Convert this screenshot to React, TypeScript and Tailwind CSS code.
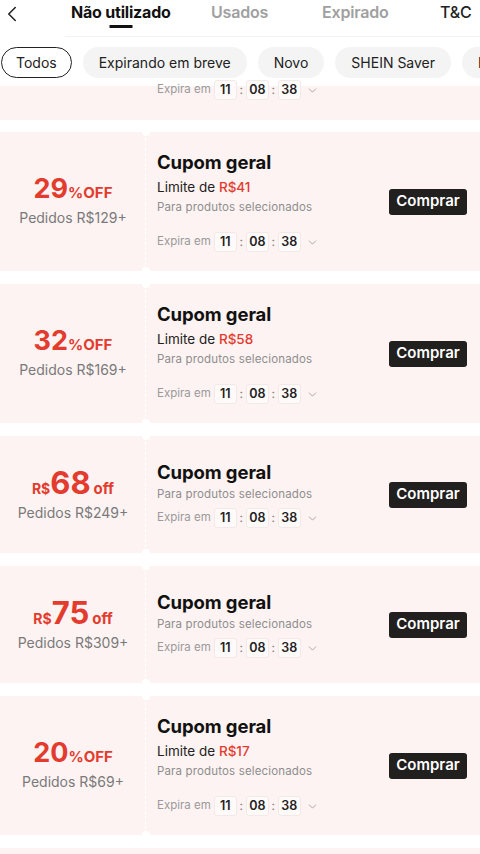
import { ChevronDown, ChevronLeft } from 'lucide-react';

type Coupon = {
  kind: 'pct' | 'amt';
  value: string;
  min: string;
  limit?: string;
};

const coupons: Coupon[] = [
  { kind: 'pct', value: '29', min: 'Pedidos R$129+', limit: 'R$41' },
  { kind: 'pct', value: '32', min: 'Pedidos R$169+', limit: 'R$58' },
  { kind: 'amt', value: '68', min: 'Pedidos R$249+' },
  { kind: 'amt', value: '75', min: 'Pedidos R$309+' },
  { kind: 'pct', value: '20', min: 'Pedidos R$69+', limit: 'R$17' },
];

const chips = ['Todos', 'Expirando em breve', 'Novo', 'SHEIN Saver', 'Exclusivo'];

function Timer() {
  return (
    <div className="flex items-center h-[22px] text-[11.5px]">
      <span className="text-[#9a9a9a] mr-[3px]">Expira em</span>
      {['11', '08', '38'].map((t, i) => (
        <div key={t} className="flex items-center">
          {i > 0 && <span className="text-[#777] w-[9px] text-center text-[12px]">:</span>}
          <span className="h-[20px] w-[23px] flex items-center justify-center rounded-[3px] bg-[#fffafa] border border-[#f4e8e8] text-[12.5px] font-semibold text-[#222]">
            {t}
          </span>
        </div>
      ))}
      <ChevronDown size={13} strokeWidth={1.5} className="ml-[5px] text-[#999]" />
    </div>
  );
}

function CouponCard({ c }: { c: Coupon }) {
  const tall = !!c.limit;
  return (
    <div className={`flex bg-[#fdf3f2] ${tall ? 'h-[139px]' : 'h-[117px]'}`}>
      <div className="relative w-[146px] shrink-0 flex flex-col items-center justify-center">
        {c.kind === 'pct' ? (
          <div className="flex items-baseline text-[#e33b2e] font-bold leading-none">
            <span className="text-[27px]">{c.value}</span>
            <span className="text-[15px]">%OFF</span>
          </div>
        ) : (
          <div className="flex items-baseline text-[#e33b2e] font-bold leading-none">
            <span className="text-[14px]">R$</span>
            <span className="text-[31px]">{c.value}</span>
            <span className="text-[15px] ml-[3px]">off</span>
          </div>
        )}
        <div className={`text-[14px] text-[#7a7a7a] ${c.kind === 'pct' ? 'mt-[5px]' : 'mt-[4px]'}`}>{c.min}</div>
        <div className="absolute right-0 top-[6px] bottom-[6px] border-r border-dashed border-white" />
        <div className="absolute -right-[4px] -top-[4px] w-[8px] h-[8px] rounded-full bg-white" />
        <div className="absolute -right-[4px] -bottom-[4px] w-[8px] h-[8px] rounded-full bg-white" />
      </div>
      <div className="flex-1 flex items-center pl-[11px] pr-[13px]">
        <div className="flex-1 flex flex-col">
          <div className="text-[18.5px] leading-[24px] font-bold text-[#111] tracking-[-0.1px]">Cupom geral</div>
          {c.limit && (
            <div className="mt-[3px] text-[13.5px] leading-[20px] text-[#222]">
              Limite de <span className="text-[#e33b2e] font-medium">{c.limit}</span>
            </div>
          )}
          <div className="mt-[1px] text-[11.5px] leading-[18px] text-[#8e8e8e] tracking-[0.15px]">Para produtos selecionados</div>
          <div className={tall ? 'mt-[15px]' : 'mt-[4px]'}>
            <Timer />
          </div>
        </div>
        <button className="w-[78px] h-[26px] rounded-[3px] bg-[#221f1f] text-white text-[15px] font-semibold">
          Comprar
        </button>
      </div>
    </div>
  );
}

export default function App() {
  return (
    <div className="w-[480px] h-[854px] overflow-hidden bg-white" style={{ fontFamily: 'Inter, "Noto Sans", sans-serif' }}>
      {/* top tabs */}
      <div className="relative h-[38px] flex items-start pt-[1px] whitespace-nowrap">
        <ChevronLeft size={26} strokeWidth={1.4} className="ml-[-1px] shrink-0 text-[#222]" />
        <div className="flex items-start ml-[46px] text-[16px] font-semibold leading-[22px] tracking-[-0.2px]">
          <div className="w-[140px]">
            <div className="relative inline-block text-[#111] font-bold">
              Não utilizado
              <div className="absolute left-1/2 -translate-x-1/2 top-[24px] w-[23px] h-[3px] bg-[#111]" />
            </div>
          </div>
          <div className="w-[111px] text-[#a0a0a0]">Usados</div>
          <div className="w-[118px] text-[#a0a0a0]">Expirado</div>
          <div className="text-[#222] font-medium">T&amp;C</div>
        </div>
        <div className="absolute left-[65px] right-0 bottom-[1px] h-px bg-[#f2f2f2]" />
      </div>

      {/* filter chips */}
      <div className="h-[48px] flex items-start pt-[9px] gap-[11px] whitespace-nowrap">
        {chips.map((c, i) => (
          <div
            key={c}
            className={
              i === 0
                ? 'h-[31px] shrink-0 ml-[1px] px-[14px] flex items-center rounded-full border border-[#222] bg-white text-[14px] text-[#222]'
                : 'h-[31px] shrink-0 px-4 flex items-center rounded-full bg-[#f4f4f4] text-[14px] text-[#222]'
            }
          >
            {c}
          </div>
        ))}
      </div>

      {/* coupon list */}
      <div className="flex flex-col gap-[12px]">
        <div className="h-[34px] bg-[#fdf3f2] flex items-start pl-[157px]">
          <div className="-mt-[7px]">
            <Timer />
          </div>
        </div>
        <div className="flex flex-col gap-[13px]">
          {coupons.map((c, i) => (
            <CouponCard key={i} c={c} />
          ))}
          <div className="h-[20px] bg-[#fdf3f2]" />
        </div>
      </div>
    </div>
  );
}
